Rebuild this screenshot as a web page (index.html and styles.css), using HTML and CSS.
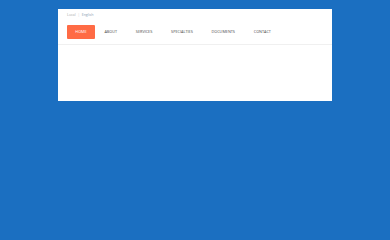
FILE: index.html
```html
<!DOCTYPE html>
<html>
<head>
<meta charset="utf-8">
<link rel="stylesheet" href="styles.css">
</head>
<body>
<div class="panel">
  <div class="topbar"><span class="loc">Local</span><span class="sep">|</span><span class="lang">English</span></div>
  <nav class="nav">
    <a class="item active">HOME</a>
    <a class="item">ABOUT</a>
    <a class="item">SERVICES</a>
    <a class="item">SPECIALTIES</a>
    <a class="item">DOCUMENTS</a>
    <a class="item">CONTACT</a>
  </nav>
  <div class="content"></div>
</div>
</body>
</html>
```
FILE: styles.css
```css
html, body { margin: 0; padding: 0; }
body {
  background: #1b6fc1;
  width: 390px;
  height: 240px;
  font-family: "Open Sans", "Liberation Sans", sans-serif;
  padding: 9px 0 0 58px;
  box-sizing: border-box;
}
.panel {
  width: 274px;
  height: 92px;
  background: #ffffff;
  display: flex;
  flex-direction: column;
  box-sizing: border-box;
}
.topbar {
  height: 14px;
  padding: 3px 0 0 9px;
  box-sizing: border-box;
  font-size: 3.6px;
  color: #a9a9a9;
  display: flex;
  gap: 2px;
  align-items: flex-start;
}
.topbar .sep { color: #d0d0d0; }
.topbar .lang { color: #8a9bb0; }
.nav {
  display: flex;
  align-items: flex-start;
  padding: 2px 0 0 9px;
  height: 19px;
  border-bottom: 1px solid #f0f0f0;
  box-sizing: content-box;
}
.item {
  font-size: 3.8px;
  color: #4a4a4a;
  padding: 0 9.4px;
  line-height: 14px;
}
.item.active {
  background: #ff6b45;
  color: #fff;
  border-radius: 1px;
  width: 28px;
  padding: 0;
  text-align: center;
}
.content { flex: 1; }
```
